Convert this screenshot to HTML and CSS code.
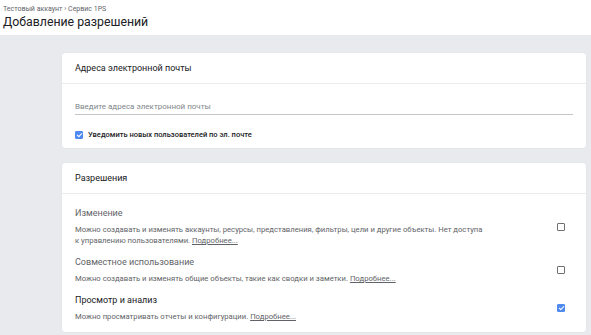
FILE: index.html
```html
<!DOCTYPE html>
<html lang="ru">
<head>
  <meta charset="UTF-8">
  <title>Добавление разрешений</title>
  <link rel="stylesheet" href="styles.css">
</head>
<body>

<header class="top">
  <div class="crumbs">Тестовый аккаунт <span class="sep">›</span> Сервис 1PS</div>
  <h1 class="title">Добавление разрешений</h1>
</header>

<main class="content">
  <!-- Почта -->
  <section class="card">
    <div class="card-head">Адреса электронной почты</div>
    <div class="card-body mail">
      <input class="mail-input" type="text" placeholder="Введите адреса электронной почты">
      <label class="notify">
        <span class="box checked"></span>
        Уведомить новых пользователей по эл. почте
      </label>
    </div>
  </section>

  <!-- Разрешения -->
  <section class="card">
    <div class="card-head">Разрешения</div>
    <div class="card-body perms">
      <div class="perm">
        <div class="perm-text">
          <div class="perm-name">Изменение</div>
          <div class="perm-desc">Можно создавать и изменять аккаунты, ресурсы, представления, фильтры, цели и другие объекты. Нет доступа к управлению пользователями. <a href="#">Подробнее...</a></div>
        </div>
        <span class="box"></span>
      </div>
      <div class="perm">
        <div class="perm-text">
          <div class="perm-name">Совместное использование</div>
          <div class="perm-desc">Можно создавать и изменять общие объекты, такие как сводки и заметки. <a href="#">Подробнее...</a></div>
        </div>
        <span class="box"></span>
      </div>
      <div class="perm active">
        <div class="perm-text">
          <div class="perm-name">Просмотр и анализ</div>
          <div class="perm-desc">Можно просматривать отчеты и конфигурации. <a href="#">Подробнее...</a></div>
        </div>
        <span class="box checked"></span>
      </div>
    </div>
  </section>
</main>

</body>
</html>
```

FILE: styles.css
```css
html, body {
  margin: 0;
  height: 100%;
  background: #e8eaed;
  font-family: Roboto, "Liberation Sans", sans-serif;
  color: #3c4043;
}

body {
  display: flex;
  flex-direction: column;
}

.top {
  background: #fff;
  padding: 5px 3px 0;
  height: 30px;
}

.crumbs {
  font-size: 7px;
  color: #5f6368;
  line-height: 9px;
}

.title {
  margin: 0;
  font-size: 12.3px;
  font-weight: 400;
  color: #202124;
  line-height: 16px;
}

.content {
  flex: 1;
  padding: 18px 5px 0 62px;
  display: flex;
  flex-direction: column;
  gap: 15px;
}

.card {
  background: #fff;
  border-radius: 3px;
  box-shadow: 0 0 1px rgba(0, 0, 0, 0.12);
}

.card-head {
  height: 30px;
  line-height: 30px;
  padding: 0 13px;
  font-size: 9px;
  color: #202124;
  border-bottom: 1px solid #ebebeb;
}

.card-body {
  padding: 0 13px;
}

/* Почта */
.mail {
  padding-top: 17px;
  padding-bottom: 9px;
}

.mail-input {
  display: block;
  width: 100%;
  box-sizing: border-box;
  border: 0;
  border-bottom: 1px solid #c4c6c8;
  padding: 0 0 2px;
  margin: 0;
  font-family: inherit;
  font-size: 8px;
  line-height: 11px;
  color: #3c4043;
  outline: none;
}

.mail-input::placeholder {
  color: #80868b;
}

.notify {
  display: flex;
  align-items: center;
  gap: 5px;
  margin-top: 15px;
  font-size: 7.5px;
  font-weight: 500;
  color: #202124;
}

/* Чекбоксы */
.box {
  width: 6px;
  height: 6px;
  border: 1.5px solid #707070;
  border-radius: 1px;
  flex: none;
  position: relative;
}

.box.checked {
  background: #4f8af0;
  border-color: #4f8af0;
}

.box.checked::after {
  content: "";
  position: absolute;
  left: 1.5px;
  top: 0;
  width: 2px;
  height: 4px;
  border: solid #fff;
  border-width: 0 1px 1px 0;
  transform: rotate(45deg);
}

/* Разрешения */
.perms {
  padding-top: 13px;
}

.perm {
  display: flex;
  align-items: center;
  justify-content: space-between;
  padding-right: 8px;
  margin-bottom: 10px;
}

.perm-text {
  max-width: 412px;
}

.perm-name {
  font-size: 9px;
  color: #5f6368;
  line-height: 12px;
  margin-bottom: 5px;
}

.active .perm-name {
  color: #202124;
}

.perm-desc {
  font-size: 7.7px;
  line-height: 11px;
  color: #5f6368;
}

.perm-desc a {
  color: #5f6368;
  text-decoration: underline;
}
```
